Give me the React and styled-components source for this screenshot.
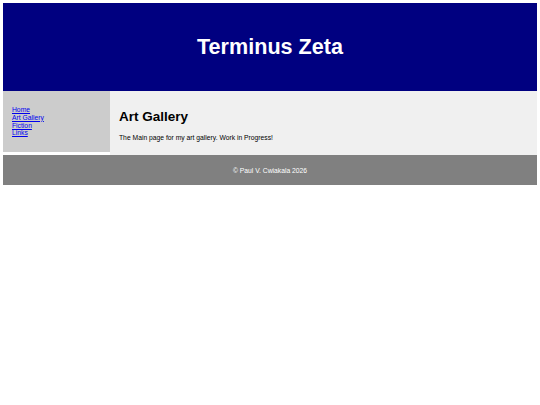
import React from "react";
import styled, { createGlobalStyle } from "styled-components";

const GlobalStyle = createGlobalStyle`
  body {
    margin: 3px;
    font-family: "Liberation Sans", Arial, sans-serif;
    background: #fff;
  }
`

const Header = styled.header`
  height: 88px;
  background: #000080;
  display: flex;
  align-items: center;
  justify-content: center;

  h1 {
    margin: 0;
    color: #fff;
    font-size: 21.6px;
    font-weight: bold;
  }
`

const Row = styled.div`
  display: flex;
  align-items: flex-start;
`

const Sidebar = styled.nav`
  width: 107px;
  box-sizing: border-box;
  background: #cccccc;
  padding: 15px 9px 15px;

  ul {
    list-style: none;
    margin: 0;
    padding: 0;
    font-size: 6.75px;
    line-height: 7.8px;
  }

  a {
    color: #0000ee;
    text-decoration: underline;
  }
`

const Main = styled.main`
  flex: 1;
  background: #f0f0f0;
  padding: 17.5px 9px 13.5px;

  h2 {
    margin: 0 0 10px;
    font-size: 13.5px;
    line-height: 15.5px;
    color: #000;
  }

  p {
    margin: 0;
    font-size: 6.75px;
    line-height: 7.8px;
    color: #000;
  }
`

const Footer = styled.footer`
  height: 30px;
  background: #808080;
  display: flex;
  align-items: center;
  justify-content: center;
  color: #fff;
  font-size: 6.75px;
`

const links = ["Home", "Art Gallery", "Fiction", "Links"]

export default function App() {
  return (
    <>
      <GlobalStyle />
      <Header>
        <h1>Terminus Zeta</h1>
      </Header>
      <Row>
        <Sidebar>
          <ul>
            {links.map((link) => (
              <li key={link}><a href="#">{link}</a></li>
            ))}
          </ul>
        </Sidebar>
        <Main>
          <h2>Art Gallery</h2>
          <p>The Main page for my art gallery. Work in Progress!</p>
        </Main>
      </Row>
      <Footer>© Paul V. Cwiakala 2026</Footer>
    </>
  )
}
